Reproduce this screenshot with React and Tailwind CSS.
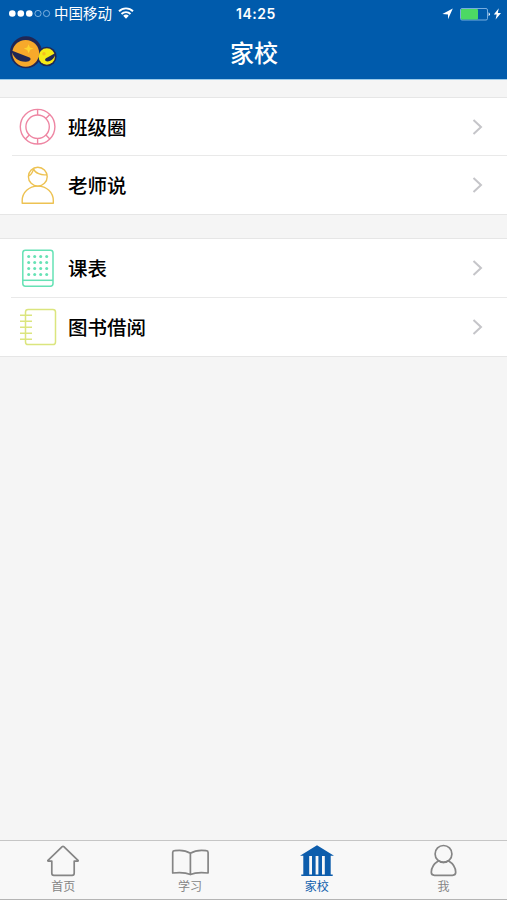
import React from 'react';

function RingIcon() {
  return (
    <svg width="38" height="38" viewBox="0 0 38 38" fill="none" stroke="#ee86a3" strokeWidth="1.4">
      <circle cx="18.6" cy="18.7" r="17.3" />
      <circle cx="18.6" cy="18.7" r="11.7" />
      <path d="M18.6 1.4v5.6M18.6 30.4v5.6M30.8 6.5l-3.9 3.9M6.4 30.9l3.9-3.9M30.8 30.9l-3.9-3.9" />
    </svg>
  );
}

function TeacherIcon() {
  return (
    <svg width="38" height="38" viewBox="0 0 38 38" fill="none" stroke="#edc252" strokeWidth="1.4" strokeLinejoin="round">
      <circle cx="18.8" cy="10.7" r="9.4" />
      <path d="M9.8 9.9C11.8 9.1 13.5 6.7 14.6 2.9C16 6.9 22.2 9.8 28.2 8.6" />
      <path d="M3.2 37.2v-2.6C3.2 26.1 10 20.1 18.8 20.1s15.5 6 15.5 14.5v2.6z" />
    </svg>
  );
}

function TimetableIcon() {
  const dots = [9.7, 15.7, 21.7, 27.7];
  return (
    <svg width="38" height="38" viewBox="0 0 38 38" fill="none" stroke="#66e2b5" strokeWidth="1.5">
      <rect x="3.8" y="1.2" width="30.2" height="36" rx="2.6" />
      <path d="M3.8 31.3h30.2" />
      {dots.map((x) =>
        [7.5, 13.5, 19.5, 25.5].map((y) => (
          <circle key={`${x}-${y}`} cx={x} cy={y} r="1.5" fill="#66e2b5" stroke="none" />
        ))
      )}
    </svg>
  );
}

function NotebookIcon() {
  return (
    <svg width="38" height="38" viewBox="0 0 38 38" fill="none" stroke="#dbe57e" strokeWidth="1.5">
      <rect x="6.5" y="1.5" width="30" height="35" rx="2.6" />
      <path d="M1 7.2h12M1 13.2h12M1 19.2h12M1 25.2h12M1 31.2h12" />
    </svg>
  );
}

function HomeIcon() {
  return (
    <svg width="40" height="34" viewBox="0 0 40 34" fill="none" stroke="#858585" strokeWidth="1.7" strokeLinejoin="round">
      <path d="M19.2 2.7q.8-.7 1.6 0L35 16.3q.6.8-.4.8h-3.4v12.2q0 2-2 2H10.8q-2 0-2-2V17.1H5.4q-1 0-.4-.8z" />
    </svg>
  );
}

function BookIcon() {
  return (
    <svg width="40" height="34" viewBox="0 0 40 34" fill="none" stroke="#858585" strokeWidth="1.7" strokeLinejoin="round">
      <path d="M20.4 9.2C16 6.5 9 6 4.6 6.7Q2.700 6.900 2.700 8.500v20.500c6-.7 13-.7 17.700 1.600 4.700-2.300 11.700-2.300 17.700-1.600V8.500q0-1.600-1.900-1.800C31.400 6 24.900 6.500 20.400 9.200zM20.400 9.200v21.400" />
    </svg>
  );
}

function SchoolIcon() {
  return (
    <svg width="40" height="34" viewBox="0 0 40 34" fill="#0d5dac">
      <path d="M20 1.3 37 11.7h-3.3v18.9h2V32H4.3v-1.4h2V11.7H3z" />
      <path fill="#f8f8f8" d="M12.2 12H15v18.500h-2.800zM18.600 12h2.800v18.500h-2.800zM25 12h2.800v18.500H25z" />
    </svg>
  );
}

function MeIcon() {
  return (
    <svg width="40" height="34" viewBox="0 0 40 34" fill="none" stroke="#858585" strokeWidth="1.7" strokeLinejoin="round">
      <circle cx="19.5" cy="9.9" r="8.4" />
      <path d="M14.6 16.7C10 19.5 7.3 24 7.3 28.3q0 3 3.2 3h18q3.2 0 3.2-3c0-4.300-2.700-8.800-7.300-11.600" />
      <path d="M14.600 16.700q4.900 3.200 9.800 0" />
    </svg>
  );
}

function Logo() {
  return (
    <svg width="48" height="34" viewBox="0 0 48 34">
      <circle cx="16" cy="16.3" r="16" fill="#202755" />
      <circle cx="36.8" cy="20.5" r="9.8" fill="#202755" />
      <circle cx="15.7" cy="17.3" r="13.4" fill="#f7a92b" />
      <circle cx="36.8" cy="20.5" r="8.2" fill="#f5ea18" />
      <path fill="#202755" d="M1.5 14.500 19.500 21.500c2.200 1.300 1 4-3.500 4.200C8.500 26 3 21.500 1.500 14.500z" />
      <path fill="#fed32e" d="m18.500 8.300 1.400 3.300 3.600 1-3.400 1.200-1.500 3.500-1.400-3.400-3.400-1.300 3.400-1.100z" />
      <path fill="#202755" d="M45.500 17 36 22.300c-1.700 1.200-.8 3.200 1.200 3.200 4.300-.3 7.800-3.500 8.300-8.500z" />
      <circle cx="34" cy="17.800" r="1.700" fill="#f7be20" />
    </svg>
  );
}

function StatusBar() {
  return (
    <div className="grid h-7 grid-cols-3 items-center pl-[9px] pr-[5px] text-[14.5px] leading-7">
      <div className="flex items-center whitespace-nowrap">
        <svg width="42" height="10" viewBox="0 0 42 10" fill="#fff">
          <circle cx="3.3" cy="4.5" r="3.3" />
          <circle cx="11.8" cy="4.5" r="3.3" />
          <circle cx="20.3" cy="4.5" r="3.3" />
          <g fill="none" stroke="#9cc5eb" strokeWidth="0.8">
            <circle cx="29" cy="4.5" r="3.1" />
            <circle cx="37.5" cy="4.5" r="3.1" />
          </g>
        </svg>
        <span className="ml-[3px]">中国移动</span>
        <svg className="mb-0.5 ml-[6px]" width="16" height="12" viewBox="0 0 16 12" fill="none" stroke="#fff" strokeWidth="1.9">
          <path d="M1 4.2a10 10 0 0 1 14 0M3.5 7a6.4 6.4 0 0 1 9 0" />
          <path fill="#fff" stroke="none" d="M5.2 8.8a4 4 0 0 1 5.6 0L8 11.7z" />
        </svg>
      </div>
      <div className="pl-px text-center font-['Inter'] text-[14px] font-semibold tracking-[0.5px]">14:25</div>
      <div className="flex items-center justify-end">
        <svg width="11" height="12" viewBox="0 0 11 12" fill="#fff">
          <path d="M10.8.6 6 11.2V6.4L.4 6.1z" />
        </svg>
        <svg className="ml-[7px]" width="31" height="13" viewBox="0 0 31 13">
          <rect x="0.5" y="0.5" width="27" height="11.5" rx="1.5" fill="none" stroke="#84b7e5" strokeWidth="0.9" />
          <rect x="1" y="1" width="17" height="10.5" rx="1" fill="#4cd964" />
          <path d="M28.6 4.2q2.6 2 0 4z" fill="#fff" />
        </svg>
        <svg className="ml-[2px]" width="9" height="12" viewBox="0 0 9 12" fill="#fff">
          <path d="M5.8.2.8 6.4h2.9L2.6 11.4 8 4.9H4.8z" />
        </svg>
      </div>
    </div>
  );
}

function Row({ icon, label }) {
  return (
    <div className="flex h-full items-center pl-[19px] pr-[23px]">
      {icon}
      <span className="ml-[11px] flex-1 pt-0.5 text-[19.5px] font-medium leading-7 text-black">{label}</span>
      <svg width="12" height="18" viewBox="0 0 12 18" fill="none" stroke="#c5c5c9" strokeWidth="2">
        <path d="M1.5 2 9 9l-7.5 7" />
      </svg>
    </div>
  );
}

function Group({ children, className }) {
  return <div className={`grid border-y border-[#e6e6e6] bg-white ${className}`}>{children}</div>;
}

function Tab({ icon, label, active }) {
  return (
    <div className={`flex flex-col items-center pt-[3px] ${active ? 'text-[#0d5dac]' : 'text-[#858585]'}`}>
      {icon}
      <span className="text-[12px] leading-[18px]">{label}</span>
    </div>
  );
}

export default function App() {
  return (
    <div className="flex h-[900px] w-[507px] flex-col overflow-hidden bg-[#f5f5f5] font-['Inter','Noto_Sans_CJK_SC',sans-serif]">
      <header className="h-[80px] shrink-0 border-b border-[#9ccbea] bg-[#005bac] text-white">
        <StatusBar />
        <div className="grid h-[50px] grid-cols-3 items-center pl-[10px] pr-[10px]">
          <Logo />
          <h1 className="pl-px pt-0.5 text-center text-[24px] font-medium leading-8">家校</h1>
        </div>
      </header>

      <main className="flex flex-1 flex-col gap-[23px] pt-[17px]">
        <Group className="grid-rows-[57px_1px_58px]">
          <Row icon={<RingIcon />} label="班级圈" />
          <div className="ml-3 bg-[#e9e9e9]" />
          <Row icon={<TeacherIcon />} label="老师说" />
        </Group>
        <Group className="grid-rows-[58px_1px_58px]">
          <Row icon={<TimetableIcon />} label="课表" />
          <div className="ml-[11px] bg-[#e9e9e9]" />
          <Row icon={<NotebookIcon />} label="图书借阅" />
        </Group>
      </main>

      <nav className="grid h-[60px] shrink-0 grid-cols-4 border-b border-t border-b-[#b5b5b5] border-t-[#c6c6c6] bg-[#f8f8f8]">
        <Tab icon={<HomeIcon />} label="首页" />
        <Tab icon={<BookIcon />} label="学习" />
        <Tab icon={<SchoolIcon />} label="家校" active />
        <Tab icon={<MeIcon />} label="我" />
      </nav>
    </div>
  );
}
